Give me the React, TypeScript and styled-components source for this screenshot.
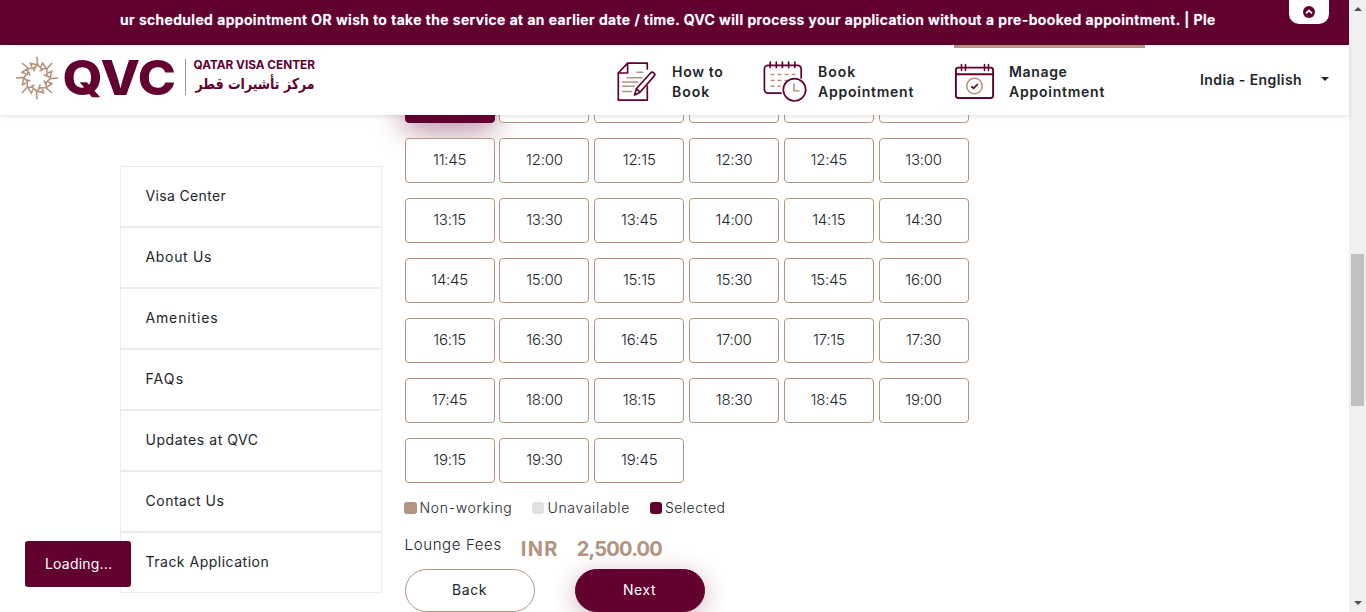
import React from "react";
import styled, { createGlobalStyle, css } from "styled-components";

const maroon = "#62002f";
const tan = "#b39480";
const ink = "#212529";

const GlobalStyle = createGlobalStyle`
  *, *::before, *::after { box-sizing: border-box; }
  body { margin: 0; background: #fff; color: ${ink}; font: 400 14px/20px Inter, "Liberation Sans", sans-serif; overflow: hidden; }
  button { font: inherit; color: inherit; cursor: pointer; }
  a { color: inherit; text-decoration: none; }
`;

const Window = styled.div`
  display: flex;
  height: 612px;
  overflow: hidden;
`;

const Page = styled.div`
  flex: 1;
  min-width: 0;
  display: flex;
  flex-direction: column;
`;

const Tracked = styled.span<{ $track?: number }>`
  letter-spacing: ${(p) => p.$track ?? 0}px;
  white-space: nowrap;
`;

/* Announcement bar */
const Announcement = styled.div`
  position: relative;
  flex: none;
  height: 45px;
  padding: 10px 134px 0 120px;
  background: ${maroon};
`;

const Marquee = styled.div`
  overflow: hidden;
  white-space: nowrap;
  color: #fff;
  font-weight: 600;
  letter-spacing: 0.41px;
  text-shadow: 0 0 1px rgba(255, 255, 255, 0.75);
`;

const CollapseTab = styled.button`
  position: absolute;
  top: 0;
  right: 20px;
  width: 40px;
  height: 24px;
  padding: 0;
  display: flex;
  align-items: center;
  justify-content: center;
  border: 0;
  border-radius: 0 0 10px 10px;
  background: #fff;
`;

/* Header */
const Header = styled.header`
  position: relative;
  z-index: 2;
  flex: none;
  display: flex;
  height: 70px;
  padding-left: 16px;
  background: #fff;
  box-shadow: 0 1px 5px rgba(0, 0, 0, 0.13);
`;

const LogoLink = styled.a`
  width: 601px;
  padding-top: 11px;
  svg { display: block; }
`;

const Nav = styled.nav`
  display: flex;
  gap: 40px;
`;

const NavItem = styled.a<{ $active?: boolean; $width: number }>`
  display: flex;
  gap: 11px;
  width: ${(p) => p.$width}px;
  height: 70px;
  padding-top: 12px;
  border-top: 3px solid ${(p) => (p.$active ? tan : "transparent")};
  svg { flex: none; display: block; }
`;

const NavLabel = styled.span`
  display: flex;
  flex-direction: column;
  padding-top: 2px;
  font-weight: 600;
`;

const Language = styled.button`
  display: flex;
  align-items: center;
  gap: 19px;
  margin-left: 55px;
  padding: 0;
  border: 0;
  background: none;
  font-weight: 600;
`;

const Caret = styled.span`
  border: 4px solid transparent;
  border-top-color: ${ink};
  border-bottom: 0;
  margin-top: -3px;
`;

/* Content */
const Content = styled.main`
  flex: 1;
  min-height: 0;
  display: flex;
  align-items: flex-start;
  gap: 22.6px;
  padding-left: 120px;
`;

const SideMenu = styled.ul`
  width: 262px;
  margin: 51px 0 0;
  padding: 0;
  list-style: none;
`;

const SideItem = styled.li`
  height: 61px;
  padding: 19px 24.5px;
  border: 1px solid #ececec;
`;

const Booking = styled.section`
  width: 564px;
  margin-top: -37px;
`;

const SlotGrid = styled.div`
  display: grid;
  grid-template-columns: repeat(6, 90px);
  grid-auto-rows: 45px;
  justify-content: space-between;
  row-gap: 15px;
`;

const Slot = styled.button<{ $selected?: boolean }>`
  padding: 0 0 1px;
  border: 1px solid ${tan};
  border-radius: 4px;
  background: #fff;
  font-size: 15px;
  font-weight: 300;
  letter-spacing: -0.25px;
  ${(p) =>
    p.$selected &&
    css`
      border-color: ${maroon};
      background: ${maroon};
      color: #fff;
      box-shadow: 0 8px 30px rgba(98, 0, 47, 0.45);
    `}
`;

const Legend = styled.div`
  display: flex;
  gap: 19.5px;
  margin: 15px 0 0 -0.6px;
  font-weight: 300;
`;

const LegendItem = styled.span`
  display: flex;
  align-items: center;
  gap: 3px;
`;

const Swatch = styled.i<{ $color: string }>`
  width: 12.5px;
  height: 12px;
  border-radius: 3px;
  background: ${(p) => p.$color};
`;

const Fees = styled.div`
  display: flex;
  align-items: flex-start;
  height: 51px;
  padding-top: 17px;
  font-size: 15px;
  font-weight: 300;
`;

const Price = styled.span`
  display: flex;
  gap: 18px;
  margin: 4px 0 0 19px;
  color: ${tan};
  font-size: 20px;
  font-weight: 700;
`;

const Actions = styled.div`
  display: flex;
  gap: 40px;
`;

const PillButton = styled.button<{ $primary?: boolean }>`
  width: 130px;
  height: 43px;
  padding: 0 0 1px;
  border: 1px solid ${(p) => (p.$primary ? maroon : tan)};
  border-radius: 22px;
  background: ${(p) => (p.$primary ? maroon : "#fff")};
  color: ${(p) => (p.$primary ? "#fff" : ink)};
  box-shadow: ${(p) => (p.$primary ? "0 5px 25px rgba(98, 0, 47, 0.3)" : "none")};
`;

const LoadingToast = styled.div`
  position: fixed;
  left: 25px;
  bottom: 25px;
  width: 106px;
  height: 46px;
  padding: 13px 20px;
  border-radius: 3px;
  background: ${maroon};
  color: #fff;
`;

/* Scrollbar */
const ScrollTrack = styled.div`
  flex: none;
  display: flex;
  flex-direction: column;
  align-items: center;
  width: 17px;
  background: #f0f0f0;
`;

const ScrollArrow = styled.span<{ $down?: boolean }>`
  border: 4px solid transparent;
  ${(p) =>
    p.$down
      ? "border-top-color: #505050; border-bottom: 0; margin: auto 0 7px;"
      : "border-bottom-color: #505050; border-top: 0; margin: 7px 0 0;"}
`;

const ScrollThumb = styled.span`
  width: 13px;
  height: 152px;
  margin-top: 243px;
  background: #c1c1c1;
`;

const Logo = () => (
  <svg width="300" height="50" viewBox="16 56 300 50" role="img" aria-label="QVC">
    <g fill="none" stroke={tan} strokeWidth="1.6" transform="translate(37 78)">
      {Array.from({ length: 8 }, (_, i) => (
        <path
          key={i}
          transform={`rotate(${i * 45})`}
          d="M0-21.2.6-13.2 5.4-8.2 2.4-7M.6-13.2-6.6-14.6-5-10.6M.4-13.4-3.4-9.6"
        />
      ))}
    </g>
    <g fill={maroon} fontFamily="Inter, sans-serif">
      <text x="62.5" y="95" fontSize="48" fontWeight="800" textLength="113.5" lengthAdjust="spacingAndGlyphs">QVC</text>
      <text x="193.5" y="69.3" fontSize="11.6" fontWeight="700" textLength="121.5" lengthAdjust="spacingAndGlyphs">QATAR VISA CENTER</text>
      <text x="314.5" y="89" fontSize="15" fontWeight="700" fontFamily="'DejaVu Sans', sans-serif" direction="rtl" textLength="119" lengthAdjust="spacingAndGlyphs">مركز تأشيرات قطر</text>
    </g>
    <path d="M185.5 59v36" stroke={tan} />
  </svg>
);

const HowToIcon = () => (
  <svg width="44" height="44" viewBox="617 60 44 44" fill="none" stroke={maroon} strokeWidth="1.7" strokeLinecap="round" strokeLinejoin="round">
    <path d="M647.3 69v-5.8H627.6L618.3 73v27.1h29V86" />
    <path d="M627.6 63.4V73H618.3" />
    <path d="M637 72.3h6M627 77.8h15M622.5 82h15M622.5 86.3h12M622.5 91.5h9" stroke={tan} strokeWidth="1.4" />
    <path d="M634.6 95l1.7-6.2L650.6 73a2.3 2.3 0 0 1 3.5 3.1L640 92.2zM636.5 88.8l3.5 3.4" fill="#fff" />
  </svg>
);

const BookIcon = () => (
  <svg width="44" height="44" viewBox="763 60 44 44" fill="none" stroke={maroon} strokeWidth="1.7" strokeLinecap="round">
    <path d="M781 93.2h-13a3.6 3.6 0 0 1-3.6-3.6V69a3.6 3.6 0 0 1 3.6-3.6h29.6a3.6 3.6 0 0 1 3.6 3.6v9" />
    <path d="M770.2 62v5.5M776.3 62v5.5M782.4 62v5.5M788.6 62v5.5M794.8 62v5.5" />
    <path d="M770.5 74.6h25M770.5 80.6h17M770.5 86.3h10" stroke={tan} strokeWidth="1.5" strokeLinecap="butt" strokeDasharray="4 3" />
    <circle cx="794.5" cy="89.8" r="11.2" fill="#fff" />
    <path d="M794 84v6.7h5" stroke={tan} strokeWidth="1.6" />
  </svg>
);

const ManageIcon = () => (
  <svg width="44" height="44" viewBox="954 60 44 44" fill="none" stroke={maroon} strokeWidth="1.9" strokeLinecap="round">
    <rect x="955.9" y="67.6" width="37.2" height="30.4" rx="2.5" />
    <path d="M956 74.3h37" />
    <path d="M961.5 64.6v5.8M965.5 64.6v5.8M984.5 64.6v5.8M988.5 64.6v5.8" strokeWidth="1.6" />
    <circle cx="974.5" cy="86" r="7.7" stroke={tan} strokeWidth="1.5" />
    <path d="M971.3 86.3l2.3 2.1 4.2-4.4" strokeWidth="1.7" strokeLinecap="butt" />
  </svg>
);

const times = [
  "10:15", "10:30", "10:45", "11:00", "11:15", "11:30",
  "11:45", "12:00", "12:15", "12:30", "12:45", "13:00",
  "13:15", "13:30", "13:45", "14:00", "14:15", "14:30",
  "14:45", "15:00", "15:15", "15:30", "15:45", "16:00",
  "16:15", "16:30", "16:45", "17:00", "17:15", "17:30",
  "17:45", "18:00", "18:15", "18:30", "18:45", "19:00",
  "19:15", "19:30", "19:45",
];

const menu: [string, number][] = [
  ["Visa Center", 0.35],
  ["About Us", 0.67],
  ["Amenities", 0.85],
  ["FAQs", 1.1],
  ["Updates at QVC", 0.55],
  ["Contact Us", 0.52],
  ["Track Application", 0.5],
];

export default function App() {
  return (
    <Window>
      <GlobalStyle />
      <Page>
        <Announcement>
          <Marquee>
            ur scheduled appointment OR wish to take the service at an earlier date / time. QVC will process your
            application without a pre-booked appointment. | Please
          </Marquee>
          <CollapseTab aria-label="Collapse">
            <svg width="12" height="12" viewBox="0 0 12 12">
              <circle cx="6" cy="6" r="6" fill={maroon} />
              <path d="M3 7.4l3-3 3 3" fill="none" stroke="#fff" strokeWidth="1.8" />
            </svg>
          </CollapseTab>
        </Announcement>
        <Header>
          <LogoLink href="#">
            <Logo />
          </LogoLink>
          <Nav>
            <NavItem href="#" $width={106}>
              <HowToIcon />
              <NavLabel>
                <Tracked $track={0.7}>How to</Tracked>
                <Tracked $track={1}>Book</Tracked>
              </NavLabel>
            </NavItem>
            <NavItem href="#" $width={151}>
              <BookIcon />
              <NavLabel>
                <Tracked $track={1}>Book</Tracked>
                <Tracked $track={0.76}>Appointment</Tracked>
              </NavLabel>
            </NavItem>
            <NavItem href="#" $width={191} $active>
              <ManageIcon />
              <NavLabel>
                <Tracked $track={0.65}>Manage</Tracked>
                <Tracked $track={0.76}>Appointment</Tracked>
              </NavLabel>
            </NavItem>
          </Nav>
          <Language>
            <Tracked $track={0.41}>India - English</Tracked>
            <Caret />
          </Language>
        </Header>
        <Content>
          <SideMenu>
            {menu.map(([label, track]) => (
              <SideItem key={label}>
                <Tracked as="a" href="#" $track={track}>{label}</Tracked>
              </SideItem>
            ))}
          </SideMenu>
          <Booking>
            <SlotGrid>
              {times.map((time, i) => (
                <Slot key={time} $selected={i === 0}>{time}</Slot>
              ))}
            </SlotGrid>
            <Legend>
              <LegendItem><Swatch $color={tan} /><Tracked $track={0.68}>Non-working</Tracked></LegendItem>
              <LegendItem><Swatch $color="#e0e2e4" /><Tracked $track={0.65}>Unavailable</Tracked></LegendItem>
              <LegendItem><Swatch $color={maroon} /><Tracked $track={0.45}>Selected</Tracked></LegendItem>
            </Legend>
            <Fees>
              <Tracked $track={0.62}>Lounge Fees</Tracked>
              <Price>
                <Tracked $track={1.3}>INR</Tracked>
                <Tracked $track={-0.75}>2,500.00</Tracked>
              </Price>
            </Fees>
            <Actions>
              <PillButton><Tracked $track={0.6}>Back</Tracked></PillButton>
              <PillButton $primary><Tracked $track={0.6}>Next</Tracked></PillButton>
            </Actions>
          </Booking>
        </Content>
        <LoadingToast><Tracked $track={0.2}>Loading...</Tracked></LoadingToast>
      </Page>
      <ScrollTrack>
        <ScrollArrow />
        <ScrollThumb />
        <ScrollArrow $down />
      </ScrollTrack>
    </Window>
  );
}
